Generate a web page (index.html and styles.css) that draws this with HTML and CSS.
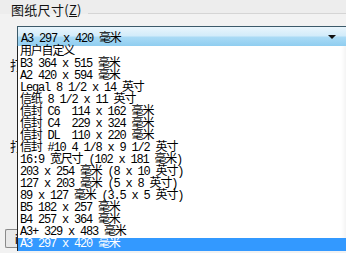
FILE: index.html
```html
<!DOCTYPE html>
<html lang="zh-CN">
<head>
    <meta charset="UTF-8">
    <meta name="viewport" content="width=device-width, initial-scale=1.0">
    <title>图纸尺寸</title>
    <link rel="stylesheet" href="styles.css">
</head>
<body>
    <div class="panel">
        <div class="legend">
            <span class="legend-text">图纸尺寸(<u>Z</u>)</span>
            <span class="legend-line"></span>
        </div>

        <div class="combo">
            <span class="combo-value">A3 297 x 420 毫米</span>
            <span class="combo-arrow"></span>
        </div>

        <!-- controls hidden behind the open list -->
        <div class="behind">
            <div class="behind-label lbl-1"><span>打</span></div>
            <div class="behind-label lbl-2"><span>打</span></div>
            <div class="behind-btn">i</div>
        </div>

        <ul class="droplist">
            <li>用户自定义</li>
            <li>B3 364 x 515 毫米</li>
            <li>A2 420 x 594 毫米</li>
            <li>Legal 8 1/2 x 14 英寸</li>
            <li>信纸 8 1/2 x 11 英寸</li>
            <li>信封 C6  114 x 162 毫米</li>
            <li>信封 C4  229 x 324 毫米</li>
            <li>信封 DL  110 x 220 毫米</li>
            <li>信封 #10 4 1/8 x 9 1/2 英寸</li>
            <li>16:9 宽尺寸 (102 x 181 毫米)</li>
            <li>203 x 254 毫米 (8 x 10 英寸)</li>
            <li>127 x 203 毫米 (5 x 8 英寸)</li>
            <li>89 x 127 毫米 (3.5 x 5 英寸)</li>
            <li>B5 182 x 257 毫米</li>
            <li>B4 257 x 364 毫米</li>
            <li>A3+ 329 x 483 毫米</li>
            <li class="selected">A3 297 x 420 毫米</li>
        </ul>
    </div>
</body>
</html>
```

FILE: styles.css
```css
body {
    margin: 0;
    background-color: #f0f0f0;
    font-family: "Noto Sans CJK SC", sans-serif;
    overflow: hidden;
}
.panel {
    position: relative;
    width: 346px;
    height: 253px;
    overflow: hidden;
    background: linear-gradient(to bottom, #ededed 0, #ededed 14px, #f2f2f2 14px);
}
.legend {
    display: flex;
    align-items: center;
    height: 24px;
    padding-left: 11px;
}
.legend-text {
    font-size: 13px;
    line-height: 16px;
    color: #111;
    letter-spacing: 0.3px;
    margin-top: -4px;
}
.legend-text u {
    text-decoration-thickness: 1px;
}
.legend-line {
    flex: 1;
    height: 1px;
    background-color: #d5d5d5;
    margin-left: 6px;
    margin-top: 2px;
}
.combo {
    display: flex;
    align-items: center;
    justify-content: space-between;
    height: 19px;
    margin-left: 17px;
    margin-top: 2px;
    border: 1px solid #3c5a6a;
    border-right: none;
    background: linear-gradient(to bottom, #e9f5fc 0%, #d3ecfa 45%, #a9daf5 55%, #8fcdf0 100%);
    padding-left: 3px;
    padding-right: 10px;
}
.combo-value, .droplist li {
    font-family: "Liberation Mono", "Noto Sans CJK SC", monospace;
    font-size: 12px;
    letter-spacing: -1.2px;
    white-space: pre;
    color: #000;
}
.combo-arrow {
    width: 0;
    height: 0;
    border-left: 4px solid transparent;
    border-right: 4px solid transparent;
    border-top: 4px solid #111;
}
.behind-label {
    position: absolute;
    left: 0;
    width: 17px;
    height: 16px;
    overflow: hidden;
    font-size: 13px;
    line-height: 16px;
    color: #111;
}
.behind-label span {
    display: block;
    margin-left: 10px;
    width: 7px;
    overflow: hidden;
}
.lbl-1 {
    top: 57px;
}
.lbl-2 {
    top: 138px;
}
.behind-btn {
    position: absolute;
    left: 5px;
    top: 229px;
    width: 12px;
    height: 17px;
    border: 1px solid #8a8a8a;
    border-right: none;
    border-radius: 2px 0 0 2px;
    background-color: #e8e8e8;
    font-size: 12px;
    line-height: 17px;
    padding-left: 0;
    text-align: right;
    overflow: hidden;
}
.droplist {
    position: absolute;
    top: 46px;
    left: 17px;
    right: 0;
    height: 205px;
    margin: 0;
    padding: 0;
    list-style: none;
    background-color: #fff;
    border-left: 1px solid #222;
    box-shadow: inset -6px 0 4px -4px #f2f2f2;
}
.droplist li {
    height: 12px;
    line-height: 12px;
    padding-left: 2px;
}
.droplist li.selected {
    background-color: #3399ff;
    color: #fff;
    height: 13px;
}
```
